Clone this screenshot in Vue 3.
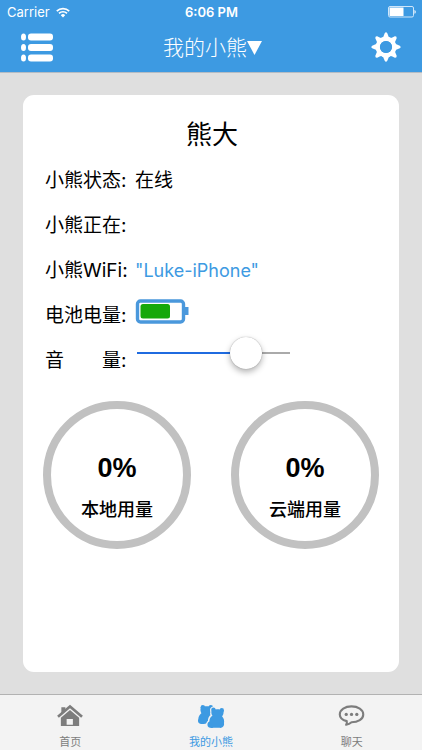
<script setup>
import { ref } from 'vue'

const bear = ref({
    name: '熊大',
    status: '在线',
    doing: '',
    wifi: '"Luke-iPhone"',
});
const volume = ref(77);
const usage = ref([
    { label: '本地用量', percent: 0 },
    { label: '云端用量', percent: 0 },
]);
const tab = ref('bear');
</script>

<template>
    <div class="page">
        <header>
            <div class="statusBar">
                <div class="carrier">
                    <span>Carrier</span>
                    <svg width="14" height="11" viewBox="0 0 14 11" fill="none" stroke="#fff" stroke-width="1.7">
                        <path d="M0.8 4.1a8.8 8.8 0 0 1 12.4 0M3 6.4a5.7 5.7 0 0 1 8 0" />
                        <path d="M4.8 8.2a3.1 3.1 0 0 1 4.4 0L7 10.5z" fill="#fff" stroke="none" />
                    </svg>
                </div>
                <span class="time">6:06 PM</span>
                <svg class="power" width="28" height="12" viewBox="0 0 28 12">
                    <rect x="0.5" y="0.5" width="25" height="10.5" rx="1.5" fill="none" stroke="#cfe6fa" />
                    <rect x="1.5" y="1.5" width="14" height="8.5" fill="#fff" />
                    <path d="M26.5 4c1.6.5 1.6 3.3 0 3.8z" fill="#fff" />
                </svg>
            </div>
            <nav class="navBar">
                <button aria-label="菜单">
                    <svg width="34" height="30" viewBox="0 0 34 30" fill="#fff">
                        <ellipse cx="3.5" cy="4" rx="2.5" ry="3.5" />
                        <ellipse cx="3.5" cy="14.5" rx="2.5" ry="3.5" />
                        <ellipse cx="3.5" cy="25" rx="2.5" ry="3.5" />
                        <rect x="8" y="0.5" width="25" height="7" rx="3" />
                        <rect x="8" y="11" width="25" height="7" rx="3" />
                        <rect x="8" y="21.5" width="25" height="7" rx="3" />
                    </svg>
                </button>
                <button class="navTitle">我的小熊<svg width="15" height="14" viewBox="0 0 15 14"><path d="M0 0h15L7.5 14z" fill="#fff" /></svg></button>
                <button aria-label="设置">
                    <svg width="30" height="32" viewBox="-15 -15 30 32">
                        <g fill="#fff">
                            <path v-for="n in 8" :key="n" :transform="`rotate(${n * 45})`" d="M-5.5 -7Q-2 -10 -1.3 -13.8Q0 -15.5 1.3 -13.8Q2 -10 5.5 -7z" />
                        </g>
                        <circle r="8.2" fill="none" stroke="#fff" stroke-width="4.4" />
                        <circle r="6.1" fill="#3d9ae2" />
                    </svg>
                </button>
            </nav>
        </header>

        <main>
            <section class="card">
                <h1>{{ bear.name }}</h1>
                <div class="row">
                    <span class="label">小熊状态:</span>
                    <span>{{ bear.status }}</span>
                </div>
                <div class="row">
                    <span class="label">小熊正在:</span>
                    <span>{{ bear.doing }}</span>
                </div>
                <div class="row">
                    <span class="label">小熊WiFi:</span>
                    <a href="#">{{ bear.wifi }}</a>
                </div>
                <div class="row">
                    <span class="label">电池电量:</span>
                    <svg class="battery" width="54" height="25" viewBox="0 0 54 25">
                        <rect x="2.5" y="2" width="46" height="21" rx="3" fill="#fff" stroke="#4a98dc" stroke-width="3.4" />
                        <rect x="5.5" y="5" width="29.5" height="14.5" rx="2.5" fill="#16a80a" />
                        <path d="M49 8h4.5v8H49z" fill="#4a98dc" />
                    </svg>
                </div>
                <div class="row">
                    <label class="label" for="volume">音　　量:</label>
                    <input id="volume" type="range" min="0" max="100" v-model="volume" :style="{ '--level': volume + '%' }">
                </div>
                <div class="usage">
                    <div class="ring" v-for="item in usage" :key="item.label">
                        <strong>{{ item.percent }}%</strong>
                        <span>{{ item.label }}</span>
                    </div>
                </div>
            </section>
        </main>

        <footer>
            <button :class="{ active: tab === 'home' }" @click="tab = 'home'">
                <svg width="28" height="26" viewBox="0 0 28 26" fill="currentColor">
                    <path d="M1.5 13.2L14 2.5l12.5 10.7" fill="none" stroke="currentColor" stroke-width="2.8" />
                    <path d="M5 3.5h4.2v4L5 11z" />
                    <path fill-rule="evenodd" d="M14 6.2l9.5 8V23h-19v-8.8zM10.5 15.5V21.5h6.5v-6z" />
                </svg>
                <span>首页</span>
            </button>
            <button :class="{ active: tab === 'bear' }" @click="tab = 'bear'">
                <svg width="28" height="26" viewBox="0 0 28 26" fill="currentColor">
                    <circle cx="5.5" cy="3.3" r="2.3" />
                    <circle cx="13.8" cy="3.3" r="2.3" />
                    <path d="M3.5 3.5C6.5 1.8 12.5 1.8 15.8 3.5L15 9 12 19 8 20.5C2 22-.5 19 .8 15.500 1 12.500 2.500 10.500 4 9.500 2.800 7.500 2.800 5.500 3.500 3.500z" />
                    <g stroke="#f3f3f3" stroke-width="2.4">
                        <circle cx="16.5" cy="6" r="2.3" />
                        <path d="M14.8 6.500C14 9 14 10.500 15 12 12.500 13.500 11.800 16 12 18.300 10 19 9.800 21.500 10.600 23.200" />
                    </g>
                    <circle cx="16.5" cy="6" r="2.3" />
                    <circle cx="25.2" cy="6.5" r="2.3" />
                    <path d="M14.8 6.500C18.500 4.800 23.500 5 27 7 27.300 9.500 26.800 11.500 25.500 12.800 27.500 15 28 17.500 27.500 20 28.200 23 25.500 25.500 22.500 24.700H16.500C13.500 25.500 10.300 24.500 10.300 21.800 10.300 19.800 11 19 12.300 18.300 12.300 16 13.200 13.500 15.500 12.300 14.300 10.500 14 8.500 14.800 6.500z" />
                </svg>
                <span>我的小熊</span>
            </button>
            <button :class="{ active: tab === 'chat' }" @click="tab = 'chat'">
                <svg width="28" height="26" viewBox="0 0 28 26" fill="currentColor">
                    <path d="M8.5 17.8C4 16.500 1.300 14 1.300 10.800 1.300 6 6.800 2.500 13.500 2.500s12.200 3.500 12.200 8.300-5.500 8.200-12.200 8.200c-1.600 1.500-3.500 2.300-5.600 2.600.8-1 1-2.300.6-3.800z" fill="none" stroke="currentColor" stroke-width="2.2" stroke-linejoin="round" />
                    <circle cx="8" cy="10.8" r="1.7" />
                    <circle cx="13.5" cy="10.8" r="1.7" />
                    <circle cx="19" cy="10.8" r="1.7" />
                </svg>
                <span>聊天</span>
            </button>
        </footer>
    </div>
</template>

<style>
body {
    background: #dfdfdf;
}
</style>

<style scoped>
.page {
    display: flex;
    flex-direction: column;
    min-height: 100vh;
    font-family: Inter, "Noto Sans CJK SC", sans-serif;
    color: #000;
}

button {
    padding: 0;
    border: none;
    background: none;
    color: inherit;
    font-family: inherit;
    cursor: pointer;
}

svg {
    display: block;
}

header {
    background: #3d9ae2;
    color: #fff;
    border-bottom: 1px solid #b4bcc4;
}

.statusBar {
    display: grid;
    grid-template-columns: 1fr auto 1fr;
    align-items: center;
    height: 24px;
    padding: 0 6px 0 7px;
    font-size: 13px;
}

.carrier {
    display: flex;
    align-items: center;
    gap: 6px;
}

.time {
    font-weight: 600;
}

.power {
    justify-self: end;
}

.navBar {
    display: flex;
    justify-content: space-between;
    align-items: center;
    height: 48px;
    padding: 0 21px 0 20px;
}

.navTitle {
    display: flex;
    align-items: center;
    font-size: 21px;
    line-height: 30px;
    font-weight: 300;
}

main {
    display: flex;
    flex: 1;
    padding: 22px 23px;
    background: #dfdfdf;
}

.card {
    flex: 1;
    padding: 20px 20px 22px 22px;
    box-sizing: border-box;
    border-radius: 11px;
    background: #fff;
}

h1 {
    margin: 0 0 3px;
    font-size: 26px;
    line-height: 40px;
    font-weight: 400;
    text-align: center;
}

.row {
    display: flex;
    height: 45px;
    font-size: 19px;
    line-height: 45px;
}

.label {
    width: 90px;
    white-space: nowrap;
}

.row a {
    color: #3d9ae2;
    font-size: 18px;
    text-decoration: none;
}

.battery {
    margin-top: 6px;
}

#volume {
    appearance: none;
    width: 153px;
    height: 30px;
    margin: 0 2px;
    background: linear-gradient(#1f6be0, #1f6be0) 0 50% / var(--level) 2px no-repeat,
                linear-gradient(#aaa, #aaa) 0 50% / 100% 2px no-repeat;
}

#volume::-webkit-slider-thumb {
    appearance: none;
    width: 32px;
    height: 32px;
    border-radius: 50%;
    background: #fff;
    box-shadow: 0 0 1px rgba(0, 0, 0, 0.4), 0 3px 6px rgba(0, 0, 0, 0.3);
}

.usage {
    display: flex;
    justify-content: space-between;
    margin: 18px 0 0 -2px;
}

.ring {
    display: flex;
    flex-direction: column;
    align-items: center;
    width: 148px;
    height: 148px;
    padding-top: 44px;
    box-sizing: border-box;
    border: 8px solid #c1c1c1;
    border-radius: 50%;
    font-size: 18px;
    line-height: 30px;
    font-weight: 500;
}

.ring strong {
    margin-bottom: 12px;
    font-family: "Liberation Sans", sans-serif;
    font-size: 27px;
    font-weight: 600;
}

footer {
    display: flex;
    justify-content: space-around;
    height: 55px;
    border-top: 1px solid #b2b2b2;
    background: #f3f3f3;
}

footer button {
    display: flex;
    flex: 1;
    flex-direction: column;
    align-items: center;
    padding-top: 9px;
    color: #7d7d7d;
    font-size: 11px;
    line-height: 16px;
}

footer button span {
    margin-top: 5px;
}

footer button.active {
    color: #3d9ae2;
}
</style>
